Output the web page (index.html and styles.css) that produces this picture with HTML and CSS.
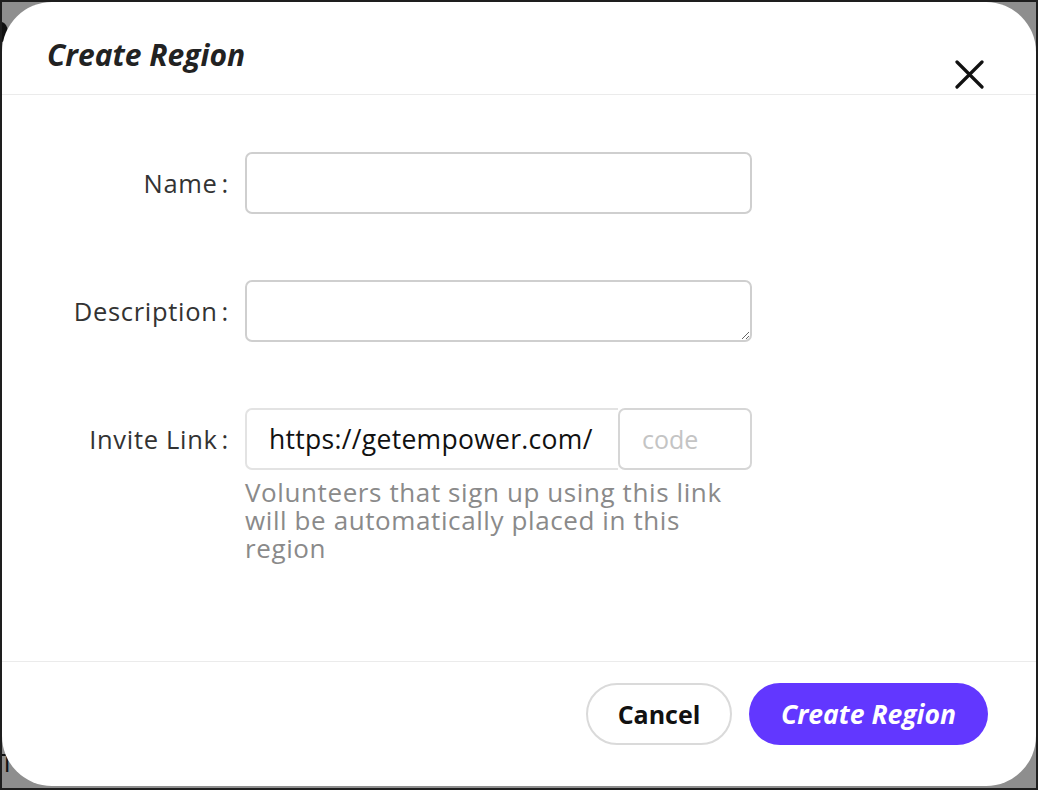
FILE: index.html
```html
<!DOCTYPE html>
<html lang="en">
<head>
<meta charset="utf-8">
<title>Create Region</title>
<link rel="stylesheet" href="styles.css">
</head>
<body>
<div class="frame">
  <div class="backdrop-dot"></div>
  <div class="backdrop-text">To</div>
  <div class="modal">
    <div class="modal-header">
      <h1 class="modal-title">Create Region</h1>
      <button class="close-btn" aria-label="Close">
        <svg width="30" height="30" viewBox="0 0 30 30"><path d="M2 2 L27 27 M27 2 L2 27" stroke="#111" stroke-width="3.2" stroke-linecap="round" fill="none"/></svg>
      </button>
    </div>
    <div class="modal-body">
      <div class="form-grid">
        <label class="form-label">Name<span class="colon">:</span></label>
        <div class="form-control"><input class="text-input" type="text"></div>

        <label class="form-label">Description<span class="colon">:</span></label>
        <div class="form-control"><textarea class="text-area"></textarea></div>

        <label class="form-label">Invite Link<span class="colon">:</span></label>
        <div class="form-control">
          <div class="input-group">
            <span class="addon">https://getempower.com/</span>
            <input class="code-input" type="text" placeholder="code">
          </div>
          <p class="help">Volunteers that sign up using this link will be automatically placed in this region</p>
        </div>
      </div>
    </div>
    <div class="modal-footer">
      <button class="btn btn-cancel">Cancel</button>
      <button class="btn btn-primary">Create Region</button>
    </div>
  </div>
</div>
</body>
</html>
```

FILE: styles.css
```css
html, body {
  margin: 0;
  padding: 0;
  background: #ffffff;
}
body {
  font-family: "Open Sans", "Noto Sans", sans-serif;
}
.frame {
  position: relative;
  width: 1038px;
  height: 790px;
  box-sizing: border-box;
  border: 2px solid #1e1e1e;
  background: #8e8e8e;
  overflow: hidden;
}
.backdrop-dot {
  position: absolute;
  left: -8px;
  top: 20px;
  width: 14px;
  height: 20px;
  border-radius: 50%;
  background: #111;
}
.backdrop-text {
  position: absolute;
  left: -2px;
  top: 742px;
  font-size: 26px;
  color: #111;
}
.modal {
  position: relative;
  width: 1034px;
  height: 784px;
  background: #fff;
  border-radius: 50px;
  display: flex;
  flex-direction: column;
  overflow: hidden;
}
.modal-header {
  height: 92px;
  border-bottom: 1px solid #ebebeb;
  display: flex;
  justify-content: space-between;
  align-items: flex-start;
  padding: 0 51px 0 45px;
  flex: none;
}
.modal-title {
  margin: 33px 0 0 0;
  font-size: 30px;
  line-height: 40px;
  font-weight: 700;
  font-style: italic;
  color: #222;
}
.close-btn {
  margin-top: 58px;
  padding: 0;
  border: 0;
  background: none;
  width: 30px;
  height: 30px;
  display: block;
}
.close-btn svg {
  display: block;
}
.modal-body {
  flex: 1;
  padding-top: 57px;
}
.form-grid {
  display: grid;
  grid-template-columns: 227px 507px;
  column-gap: 16px;
  row-gap: 66px;
  align-items: start;
}
.form-label {
  height: 62px;
  display: flex;
  align-items: center;
  justify-content: flex-end;
  font-size: 25.5px;
  color: #333;
  letter-spacing: 0.7px;
}
.colon {
  margin-left: 4px;
}
.text-input,
.text-area {
  display: block;
  width: 507px;
  height: 62px;
  box-sizing: border-box;
  border: 2px solid #cfcfcf;
  border-radius: 7px;
  background: #fff;
  font-family: inherit;
  font-size: 26px;
  padding: 10px 22px;
  margin: 0;
  outline: none;
}
.text-area {
  resize: vertical;
}
.input-group {
  display: flex;
  height: 62px;
}
.addon {
  width: 373px;
  box-sizing: border-box;
  border: 2px solid #e3e3e3;
  border-right: 0;
  border-radius: 7px 0 0 7px;
  display: flex;
  align-items: center;
  padding-left: 22px;
  font-size: 26.5px;
  letter-spacing: 0.3px;
  color: #111;
  white-space: nowrap;
}
.code-input {
  width: 134px;
  box-sizing: border-box;
  border: 2px solid #d6d6d6;
  border-radius: 7px;
  font-family: inherit;
  font-size: 25px;
  padding: 0 22px;
  margin: 0;
  outline: none;
  background: #fff;
}
.code-input::placeholder {
  color: #c4c4c4;
}
.help {
  margin: 8px 0 0 0;
  font-size: 26px;
  line-height: 28px;
  color: #8a8a8a;
  letter-spacing: 0.6px;
}
.modal-footer {
  flex: none;
  height: 125px;
  box-sizing: border-box;
  border-top: 1px solid #ebebeb;
  display: flex;
  justify-content: flex-end;
  align-items: flex-start;
  gap: 17px;
  padding: 21px 48px 0 0;
}
.btn {
  height: 62px;
  border-radius: 31px;
  font-family: inherit;
  font-size: 25px;
  font-weight: 700;
  cursor: pointer;
  margin: 0;
  padding: 0;
}
.btn-cancel {
  width: 146px;
  background: #fff;
  border: 2px solid #dadada;
  color: #111;
}
.btn-primary {
  width: 239px;
  background: #6237ff;
  border: 0;
  color: #fff;
  font-style: italic;
  font-size: 26.5px;
}
```
